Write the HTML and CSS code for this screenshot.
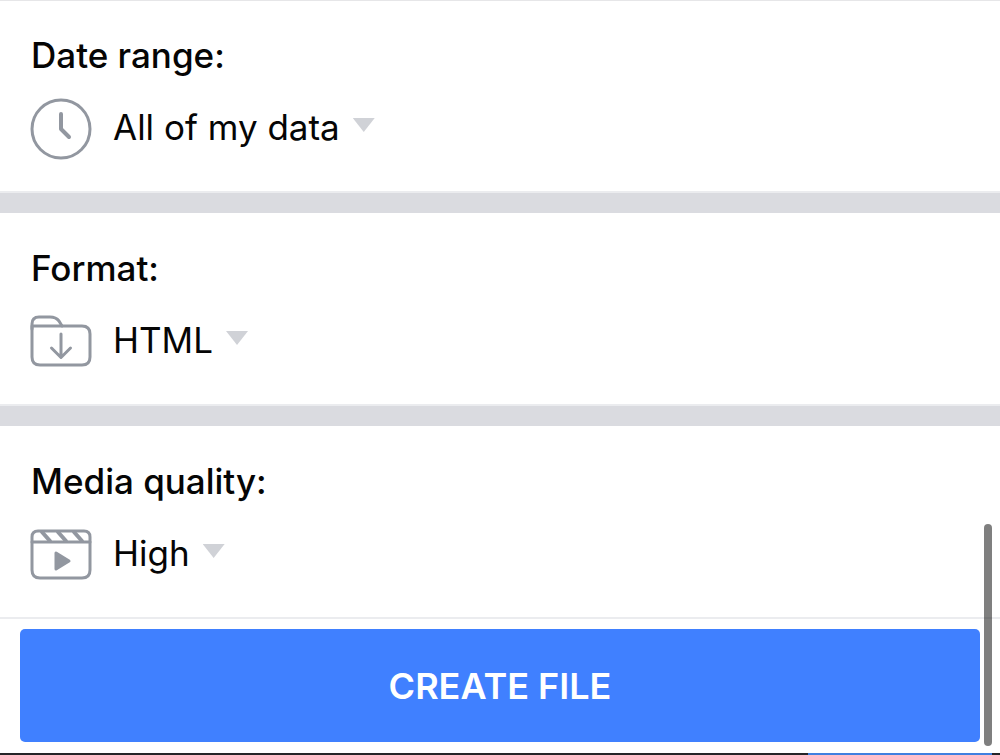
FILE: index.html
```html
<!DOCTYPE html>
<html lang="en">
<head>
    <meta charset="UTF-8">
    <meta name="viewport" content="width=device-width, initial-scale=1.0">
    <title>Create File</title>
    <link rel="stylesheet" href="styles.css">
</head>
<body>
    <form class="export-form">
        <div class="option">
            <label class="option-label" for="range">Date range:</label>
            <div class="option-row">
                <svg class="icon" viewBox="0 0 62 62" aria-hidden="true">
                    <circle cx="31" cy="31" r="29"/>
                    <path stroke-width="4" d="M31 16v15l8 8"/>
                </svg>
                <div class="picker">
                    <select id="range">
                        <option selected>All of my data</option>
                        <option>Last year</option>
                        <option>Last month</option>
                    </select>
                </div>
            </div>
        </div>

        <div class="option">
            <label class="option-label" for="format">Format:</label>
            <div class="option-row">
                <svg class="icon" viewBox="0 0 62 62" aria-hidden="true">
                    <path d="M2 18v-5q0-7 7-7h11q6 0 9 4l3 5"/>
                    <path d="M2 15h50q8 0 8 8v23q0 8-8 8H10q-8 0-8-8z"/>
                    <path d="M31 23v23M21.500 37l9.500 9.500 9.500-9.500"/>
                </svg>
                <div class="picker">
                    <select id="format">
                        <option selected>HTML</option>
                        <option>JSON</option>
                    </select>
                </div>
            </div>
        </div>

        <div class="option">
            <label class="option-label" for="quality">Media quality:</label>
            <div class="option-row">
                <svg class="icon" viewBox="0 0 62 62" aria-hidden="true">
                    <path d="M8 7h46q6 0 6 6v33q0 8-8 8H10q-8 0-8-8V13q0-6 6-6z"/>
                    <path d="M2 18h58"/>
                    <path stroke-width="4" d="M12 8l8 9M28 8l8 9M44 8l8 9"/>
                    <path class="solid" d="M26 29v16l13-8z"/>
                </svg>
                <div class="picker">
                    <select id="quality">
                        <option selected>High</option>
                        <option>Medium</option>
                        <option>Low</option>
                    </select>
                </div>
            </div>
        </div>

        <div class="actions">
            <button type="submit">CREATE FILE</button>
        </div>
    </form>
    <div class="bottom-bar"><div class="bottom-accent"></div></div>
    <div class="scroll-thumb"></div>
</body>
</html>
```

FILE: styles.css
```css
* { box-sizing: border-box; }
body { font-family: Inter, 'Liberation Sans', sans-serif; font-size: 35px; margin: 0; background: #fff; color: #050505; }
.option { padding: 33px 30px 31px; border-bottom: 2px solid #ebecef; }
.option + .option { border-top: 20px solid #dadbe0; }
.option:first-child { box-shadow: inset 0 1px #e6e6e8; }
.option-label { display: block; padding-left: 1px; line-height: 44px; font-weight: 500; }
.option-row { display: flex; align-items: center; gap: 21px; margin-top: 21px; }
.icon { width: 62px; height: 62px; fill: none; stroke: #9297a0; stroke-width: 3; stroke-linecap: round; stroke-linejoin: round; }
.icon .solid { fill: #9297a0; }
.picker { display: flex; align-items: center; gap: 13px; padding-bottom: 4px; }
.picker::after { content: ''; width: 22px; height: 14px; margin-bottom: 4px; background: #d0d2d7; clip-path: polygon(0 0, 100% 0, 50% 100%); pointer-events: none; }
select { appearance: none; field-sizing: content; margin: 0; padding: 0; border: 0; background: none; color: inherit; font: inherit; line-height: 44px; cursor: pointer; }
.actions { padding: 10px 20px 11px; }
button { display: block; width: 100%; padding: 35px 20px 34px; border: 0; border-radius: 5px; background: #4080ff; color: #fff; font-family: inherit; font-size: 36px; font-weight: 600; line-height: 44px; cursor: pointer; }
button:hover { background: #3474f0; }
.bottom-bar { padding: 0 8px 0 0; background: #252528; }
.bottom-accent { width: 184px; height: 2px; margin-left: auto; background: #4080e0; }
.scroll-thumb { position: fixed; right: 8px; bottom: 9px; width: 8px; height: 222px; border-radius: 4px; background: rgba(0, 0, 0, 0.5); }
```
